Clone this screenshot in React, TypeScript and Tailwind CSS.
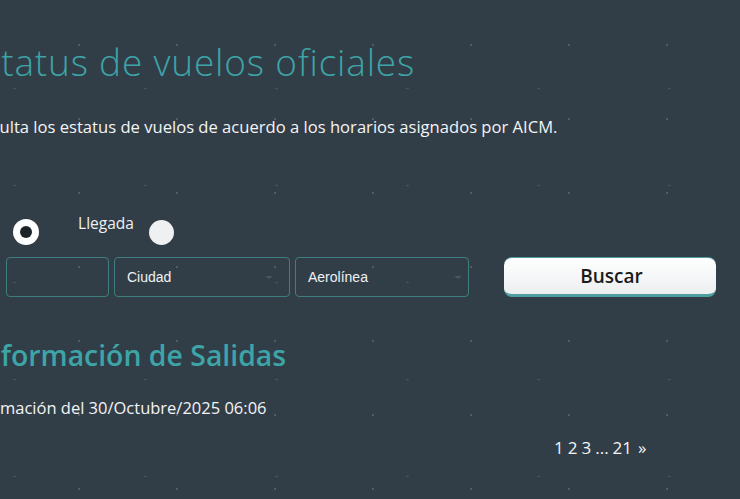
import { useState } from "react";

const pages = ["1", "2", "3", "...", "21", "»"];

export default function App() {
  const [tipo, setTipo] = useState<"salida" | "llegada">("salida");

  return (
    <div
      className="relative h-[499px] w-[740px] overflow-hidden bg-[#323e47] bg-[radial-gradient(rgba(255,255,255,0.16)_1px,transparent_1.5px),radial-gradient(rgba(255,255,255,0.1)_1px,transparent_1.5px)] bg-[size:98px_74px,131px_97px] bg-[position:30px_8px,80px_40px] text-white"
      style={{ fontFamily: '"Open Sans", "Noto Sans", sans-serif' }}
    >
      <div className="-ml-[40px] flex flex-col pt-[36px]">
        <h1 className="ml-[2px] text-[37px] font-light leading-[52px] tracking-[0.8px] text-[#3da4a7]">
          Estatus de vuelos oficiales
        </h1>
        <p className="mt-[27px] ml-[1px] text-[16.6px] leading-[24px] text-[#f2f4f5]">
          Consulta los estatus de vuelos de acuerdo a los horarios asignados por AICM.
        </p>

        {/* Tipo de vuelo */}
        <div className="mt-[78px] flex h-[30px] items-center">
          <span className="-ml-[12px] text-[15.5px] text-[#eef1f3]">Salida</span>
          <button
            type="button"
            onClick={() => setTipo("salida")}
            className="ml-[22px] flex h-[26px] w-[26px] items-center justify-center rounded-full bg-white"
          >
            {tipo === "salida" && <span className="h-[12px] w-[12px] rounded-full bg-[#1c2328]" />}
          </button>
          <span className="ml-[39px] -mt-[16px] text-[15.5px] text-[#eef1f3]">Llegada</span>
          <button
            type="button"
            onClick={() => setTipo("llegada")}
            className="ml-[15px] flex h-[25px] w-[25px] items-center justify-center rounded-full bg-[#eef0f2]"
          >
            {tipo === "llegada" && <span className="h-[12px] w-[12px] rounded-full bg-[#1c2328]" />}
          </button>
        </div>

        {/* Filtros */}
        <div className="mt-[10px] flex h-[40px] items-stretch">
          <div className="ml-[46px] w-[103px] rounded-[4px] border border-[#3f7e7f]" />
          <div className="ml-[5px] flex w-[176px] items-center justify-between rounded-[4px] border border-[#3f7e7f] pl-[12px] pr-[16px] text-[14px] text-[#eef1f3]">
            <span style={{ fontFamily: '"Liberation Sans", Arial, sans-serif' }}>Ciudad</span>
            <span className="h-0 w-0 border-x-[4px] border-t-[3px] border-x-transparent border-t-[#4a5660]" />
          </div>
          <div className="ml-[5px] flex w-[174px] items-center justify-between rounded-[4px] border border-[#3f7e7f] pl-[12px] pr-[6px] text-[14px] text-[#eef1f3]">
            <span style={{ fontFamily: '"Liberation Sans", Arial, sans-serif' }}>Aerolínea</span>
            <span className="h-0 w-0 border-x-[4px] border-t-[3px] border-x-transparent border-t-[#4a5660]" />
          </div>
          <button
            type="button"
            className="ml-[35px] w-[212px] rounded-[8px] border-t border-b-[3px] border-[#4f9fa0] bg-[linear-gradient(#ffffff,#eceef0)] pl-[3px] text-[19px] font-semibold text-[#1b1b1b]"
          >
            Buscar
          </button>
        </div>

        <h2 className="mt-[39px] ml-[14px] text-[28.4px] font-semibold leading-[38px] text-[#3da4a7]">
          Información de Salidas
        </h2>
        <p className="mt-[22px] ml-[3px] text-[16.5px] leading-[24px] text-[#f2f4f5]">
          Información del 30/Octubre/2025 06:06
        </p>
      </div>

      <div className="mt-[15px] flex justify-start pl-[554px] text-[17px] text-[#f2f4f5]">
        {pages.map((p, i) => (
          <span key={i} className={i === 0 ? "" : p === "»" ? "ml-[6px]" : "ml-[4px]"}>
            {p}
          </span>
        ))}
      </div>
    </div>
  );
}
